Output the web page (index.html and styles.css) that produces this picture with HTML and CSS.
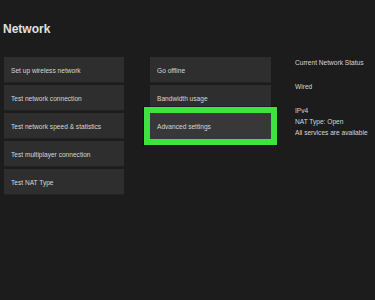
FILE: index.html
```html
<!DOCTYPE html>
<html lang="en">
  <head>
    <meta charset="utf-8" />
    <meta name="viewport" content="width=device-width, initial-scale=1" />
    <title>Network</title>
    <link rel="stylesheet" href="styles.css">
  </head>
  <body>
    <div class="settings">
      <h1 class="settings__title">Network</h1>
      <div class="settings__body">
        <div class="tiles tiles--left">
          <div class="tile">Set up wireless network</div>
          <div class="tile">Test network connection</div>
          <div class="tile">Test network speed &amp; statistics</div>
          <div class="tile">Test multiplayer connection</div>
          <div class="tile">Test NAT Type</div>
        </div>
        <div class="tiles tiles--middle">
          <div class="tile">Go offline</div>
          <div class="tile">Bandwidth usage</div>
          <div class="tile tile--focused">Advanced settings</div>
        </div>
        <div class="status">
          <div class="status__group">
            <div class="status__line">Current Network Status</div>
          </div>
          <div class="status__group">
            <div class="status__line">Wired</div>
          </div>
          <div class="status__group">
            <div class="status__line">IPv4</div>
            <div class="status__line">NAT Type: Open</div>
            <div class="status__line">All services are available</div>
          </div>
        </div>
      </div>
    </div>
  </body>
</html>
```

FILE: styles.css
```css
:root {
  --color-bg: #1c1c1c;
  --color-tile: #2e2e2e;
  --color-tile--focused: #383838;
  --color-text: #d6d6d6;
  --color-focus: #3de43d;
}

html,
body {
  margin: 0;
  height: 100%;
  background: var(--color-bg);
}

body {
  font-family: "Liberation Sans", Arial, sans-serif;
  color: var(--color-text);
}

.settings {
  padding: 22px 0 0 3px;
}

.settings__title {
  margin: 0;
  font-size: 12px;
  line-height: 14px;
  font-weight: bold;
  color: #e0e0e0;
}

.settings__body {
  display: flex;
  margin-top: 21px;
  padding-left: 1px;
}

.tiles {
  display: flex;
  flex-direction: column;
  gap: 2px;
}

.tiles--left {
  width: 120px;
}

.tiles--middle {
  width: 121px;
  margin-left: 26px;
}

.tile {
  height: 26px;
  display: flex;
  align-items: center;
  padding-left: 7px;
  background: var(--color-tile);
  box-shadow: inset 0 -1px 0 rgba(0, 0, 0, 0.25);
  font-size: 6.6px;
  white-space: nowrap;
}

.tile--focused {
  background: var(--color-tile--focused);
  outline: 6px solid var(--color-focus);
  box-shadow: 0 0 0 7px rgba(0, 0, 0, 0.35);
  position: relative;
}

.status {
  margin-left: 24px;
  font-size: 6.6px;
}

.status__group + .status__group {
  margin-top: 13px;
}

.status__line {
  line-height: 11px;
  white-space: nowrap;
}
```
